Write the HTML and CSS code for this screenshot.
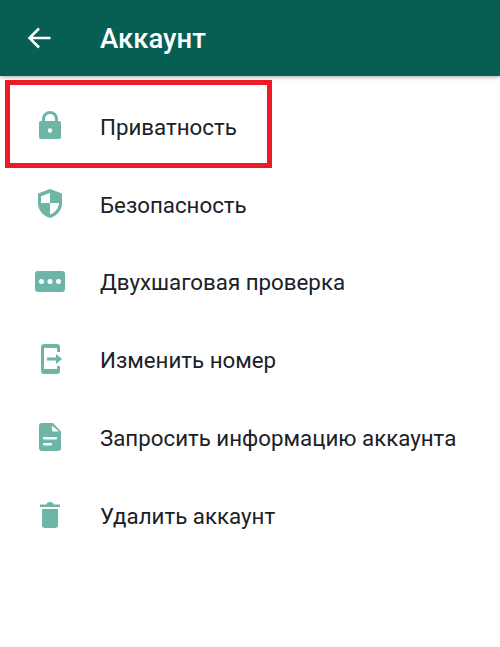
FILE: index.html
```html
<!DOCTYPE html>
<html lang="ru">
<head>
    <meta charset="UTF-8">
    <meta name="viewport" content="width=device-width, initial-scale=1.0">
    <title>Аккаунт</title>
    <link rel="stylesheet" href="styles.css">
</head>
<body>
    <!-- Toolbar -->
    <div class="toolbar">
        <svg class="back-icon" width="24" height="24" viewBox="0 0 24 24">
            <path d="M23.500 12H2.500M12 2.500L2.500 12l9.500 9.500" fill="none" stroke="#fff" stroke-width="2.600"/>
        </svg>
        <div class="toolbar-title">Аккаунт</div>
    </div>

    <!-- Menu -->
    <div class="menu">
        <div class="menu-row">
            <svg class="row-icon" width="40" height="40" viewBox="0 0 40 40">
                <path d="M13.500 15v-3a6.500 6.500 0 0 1 13 0v3" fill="none" stroke="#6db5a6" stroke-width="3"/>
                <rect x="9" y="14" width="22" height="18" rx="2" fill="#6db5a6"/>
                <circle cx="20" cy="23.500" r="2.200" fill="#fff"/>
            </svg>
            <div class="row-label">Приватность</div>
        </div>
        <div class="menu-row">
            <svg class="row-icon" width="40" height="40" viewBox="0 0 40 40">
                <path d="M20 4l12 4.500v9.500c0 7.500-5 12.500-12 15-7-2.500-12-7.500-12-15V8.500z" fill="#6db5a6"/>
                <path d="M20 8L11 11.300V18h9zM20 18v11.500c5-2 8.700-6 9-11.500z" fill="#fff"/>
            </svg>
            <div class="row-label">Безопасность</div>
        </div>
        <div class="menu-row">
            <svg class="row-icon" width="40" height="40" viewBox="0 0 40 40">
                <rect x="5" y="9" width="30" height="21" rx="3" fill="#6db5a6"/>
                <circle cx="11.500" cy="19.500" r="2.500" fill="#fff"/>
                <circle cx="20" cy="19.500" r="2.500" fill="#fff"/>
                <circle cx="28.500" cy="19.500" r="2.500" fill="#fff"/>
            </svg>
            <div class="row-label">Двухшаговая проверка</div>
        </div>
        <div class="menu-row">
            <svg class="row-icon" width="40" height="40" viewBox="0 0 40 40">
                <path d="M30 12V7a3 3 0 0 0-3-3H14a3 3 0 0 0-3 3v24a3 3 0 0 0 3 3h13a3 3 0 0 0 3-3v-5h-3v3H14V8h13v4z" fill="#6db5a6"/>
                <path d="M17 17.500h9V14l6 5-6 5v-3.500h-9z" fill="#6db5a6"/>
            </svg>
            <div class="row-label">Изменить номер</div>
        </div>
        <div class="menu-row">
            <svg class="row-icon" width="40" height="40" viewBox="0 0 40 40">
                <path d="M12 5h11l8 8.500V30a3 3 0 0 1-3 3H12a3 3 0 0 1-3-3V8a3 3 0 0 1 3-3z" fill="#6db5a6"/>
                <path d="M22 7.500L29 13.500H23.500a1.500 1.500 0 0 1-1.500-1.500z" fill="#fff"/>
                <rect x="13" y="19" width="14" height="2.600" rx="1" fill="#fff"/>
                <rect x="13" y="25" width="9" height="2.600" rx="1" fill="#fff"/>
            </svg>
            <div class="row-label">Запросить информацию аккаунта</div>
        </div>
        <div class="menu-row">
            <svg class="row-icon" width="40" height="40" viewBox="0 0 40 40">
                <path d="M10 8.500h6.500a3.500 2.500 0 0 1 7 0H30V11H10z" fill="#6db5a6"/>
                <path d="M12 13h16v16a3 3 0 0 1-3 3H15a3 3 0 0 1-3-3z" fill="#6db5a6"/>
            </svg>
            <div class="row-label">Удалить аккаунт</div>
        </div>
    </div>

    <!-- Red highlight drawn over the first row -->
    <div class="highlight"></div>
</body>
</html>
```

FILE: styles.css
```css
* { box-sizing: border-box; margin: 0; padding: 0; }
body { font-family: 'Roboto', sans-serif; background-color: #fff; color: #1a2127; height: 647px; overflow: hidden; }
.toolbar { display: flex; align-items: center; height: 76px; background-color: #075e54; box-shadow: 0 1px 4px rgba(0, 0, 0, 0.35); padding-left: 27px; }
.back-icon { margin-right: 49px; }
.toolbar-title { color: #fff; font-size: 27.5px; font-weight: 500; }
.menu { padding-top: 12px; }
.menu-row { display: flex; align-items: center; height: 77.8px; padding-left: 30px; }
.row-icon { margin-right: 30px; }
.row-label { font-size: 22.3px; }
.highlight { position: absolute; left: 5px; top: 80px; width: 267px; height: 88px; border: 5px solid #ed1c24; }
```
